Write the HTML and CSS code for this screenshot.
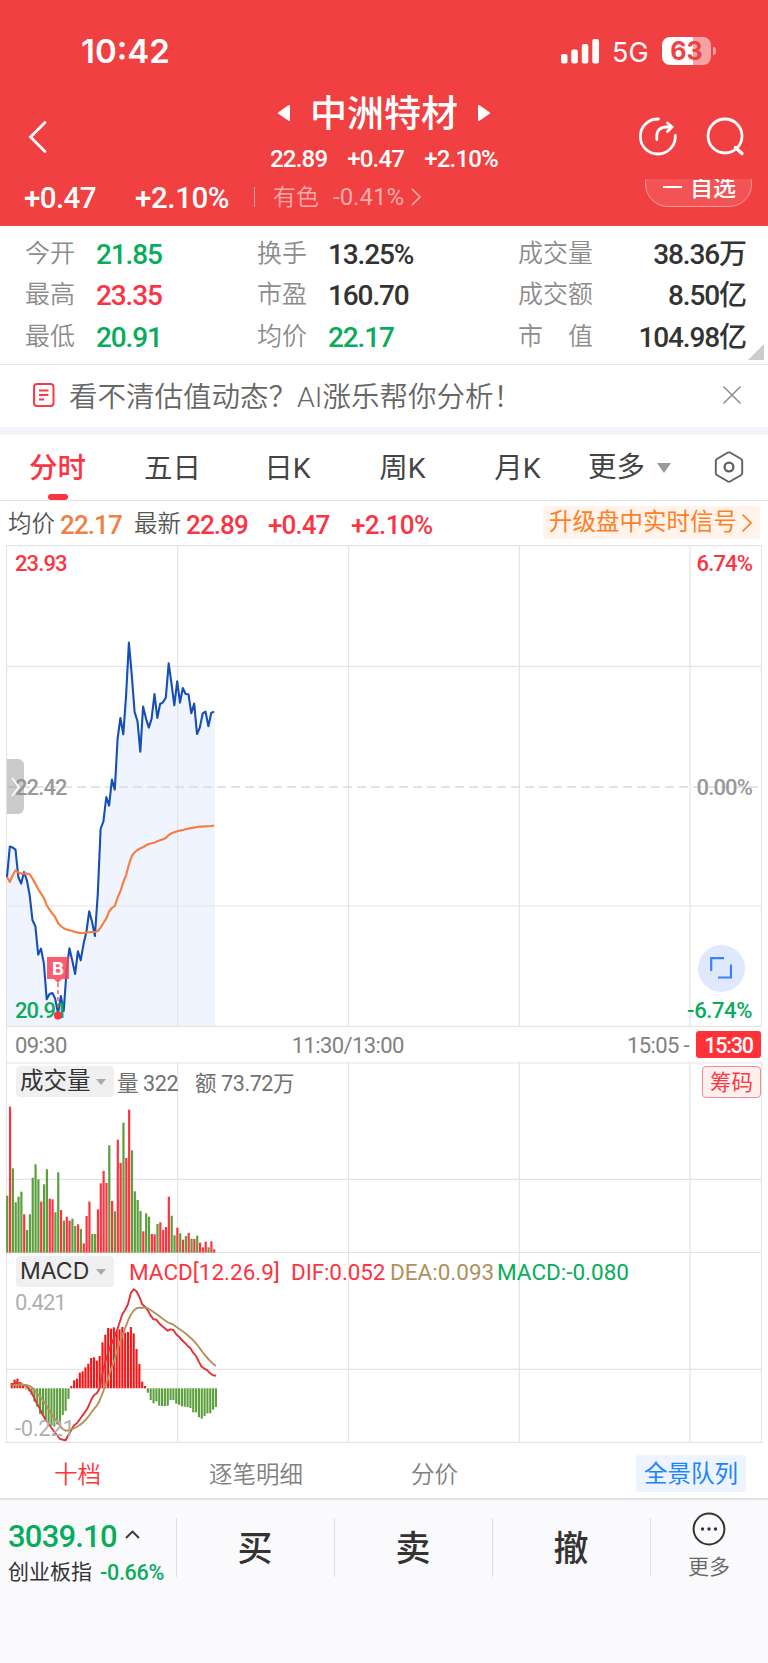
FILE: index.html
```html
<!DOCTYPE html>
<html lang="zh-CN">
<head>
	<meta charset="UTF-8" />
	<meta name="viewport" content="width=device-width, initial-scale=1.0" />
	<title>中洲特材</title>
	<link rel="stylesheet" href="styles.css">
</head>
<body>
<header>
	<div class="status">
		<span class="time">10:42</span>
		<svg class="signal" width="39" height="25" viewBox="0 0 39 25" fill="#fff">
			<rect x="0" y="15" width="6.5" height="9.5" rx="2"/>
			<rect x="10.3" y="10.5" width="6.5" height="14" rx="2"/>
			<rect x="20.8" y="5" width="6.5" height="19.5" rx="2"/>
			<rect x="31.3" y="0" width="6.7" height="24.5" rx="2"/>
		</svg>
		<span class="net">5G</span>
		<span class="battery">63</span>
	</div>
	<div class="nav">
		<svg class="back" width="20" height="34" viewBox="0 0 20 34"><path d="M17 2.500L2.500 17L17 31.500" fill="none" stroke="#fff" stroke-width="2.800" stroke-linecap="round"/></svg>
		<div class="title">
			<h1>
				<svg width="14" height="18" viewBox="0 0 14 18"><path d="M12 2V16L2 9Z" fill="#fff" stroke="#fff" stroke-width="2" stroke-linejoin="round"/></svg>
				<span>中洲特材</span>
				<svg width="14" height="18" viewBox="0 0 14 18"><path d="M2 2V16L12 9Z" fill="#fff" stroke="#fff" stroke-width="2" stroke-linejoin="round"/></svg>
			</h1>
			<div class="sub num"><span>22.89</span><span>+0.47</span><span>+2.10%</span></div>
		</div>
		<svg class="tools" width="108" height="42" viewBox="0 0 108 42" fill="none" stroke="#fff" stroke-width="2.800" stroke-linecap="round">
			<path d="M20.500 3A17.500 17.500 0 1 0 37.300 19.500"/>
			<path d="M18.800 23.500V20Q18.800 11 29 11H33.500M29.500 7L34 11L29.500 15.500"/>
			<circle cx="87" cy="20" r="17"/>
			<path d="M97.500 31.500L104 37.500" stroke-width="3.400"/>
		</svg>
	</div>
	<div class="change">
		<span class="num c1">+0.47</span>
		<span class="num c2">+2.10%</span>
		<i></i>
		<span class="sector">有色</span>
		<span class="num c3">-0.41%</span>
		<svg width="12" height="20" viewBox="0 0 12 20"><path d="M2 2L10 10L2 18" fill="none" stroke="#f9abac" stroke-width="1.700"/></svg>
		<div class="fav"><b></b>自选</div>
	</div>
</header>

<section class="quote">
	<label>今开</label><span class="num green">21.85</span>
	<label>换手</label><span class="num">13.25%</span>
	<label>成交量</label><span class="num end">38.36万</span>
	<label>最高</label><span class="num red">23.35</span>
	<label>市盈</label><span class="num">160.70</span>
	<label>成交额</label><span class="num end">8.50亿</span>
	<label>最低</label><span class="num green">20.91</span>
	<label>均价</label><span class="num green">22.17</span>
	<label>市　值</label><span class="num end">104.98亿</span>
</section>

<section class="banner">
	<svg width="22" height="24" viewBox="0 0 22 24" fill="none" stroke="#fb3a48" stroke-width="2">
		<rect x="1" y="1" width="19.500" height="22" rx="3"/>
		<path d="M6 7.500H15.500M6 12H15.500M6 16.500H11"/>
	</svg>
	<p>看不清估值动态？AI涨乐帮你分析！</p>
	<svg width="20" height="20" viewBox="0 0 20 20"><path d="M1.500 1.500L18.500 18.500M18.500 1.500L1.500 18.500" stroke="#8c8c8c" stroke-width="1.500"/></svg>
</section>

<nav class="tabs">
	<a class="active">分时</a>
	<a>五日</a>
	<a>日K</a>
	<a>周K</a>
	<a>月K</a>
	<a class="more">更多<i class="tri"></i></a>
	<svg width="30" height="32" viewBox="0 0 30 32" fill="none" stroke="#606060" stroke-width="1.900" stroke-linejoin="round">
		<path d="M13.600 1.700Q15 1 16.400 1.700L26.800 7.700Q28.200 8.600 28.200 10V22Q28.200 23.400 26.800 24.300L16.400 30.300Q15 31 13.600 30.300L3.200 24.300Q1.800 23.400 1.800 22V10Q1.800 8.600 3.200 7.700Z"/>
		<circle cx="15" cy="16" r="4.400" stroke-width="2.300"/>
	</svg>
</nav>

<div class="info">
	<span class="k">均价</span><span class="num orange">22.17</span>
	<span class="k">最新</span><span class="num red">22.89</span>
	<span class="num red i3">+0.47</span>
	<span class="num red i4">+2.10%</span>
	<div class="upgrade">升级盘中实时信号<svg width="12" height="20" viewBox="0 0 12 20"><path d="M1.500 1.500L10 10L1.500 18.500" fill="none" stroke="#ff7f27" stroke-width="1.700"/></svg></div>
</div>

<section class="panel price">
	<svg id="price" width="768" height="482" viewBox="0 0 768 482"></svg>
	<span class="lab num tl red">23.93</span>
	<span class="lab num tr red">6.74%</span>
	<span class="lab num ml">22.42</span>
	<span class="lab num mr">0.00%</span>
	<span class="lab num bl green">20.91</span>
	<span class="lab num br green">-6.74%</span>
	<div class="drawer"><svg width="9" height="20" viewBox="0 0 9 20"><path d="M1 1L8 10L1 19" fill="none" stroke="#fff" stroke-width="1.600"/></svg></div>
	<svg class="buy" width="24" height="64" viewBox="0 0 24 64">
		<path d="M1 0H23V22H16L12 26L8 22H1Z" fill="#f94256" fill-opacity=".85"/>
		<path d="M12 26V55" stroke="#f94256" stroke-width="1.300" stroke-dasharray="4 3"/>
		<circle cx="12" cy="58.500" r="4" fill="#fb3140"/>
		<text x="12" y="17.500">B</text>
	</svg>
	<div class="expand">
		<svg width="22" height="22" viewBox="0 0 22 22" fill="none" stroke="#3a82fb" stroke-width="2.200"><path d="M1.200 14V1.200H14M21 7.500V20.500H8"/></svg>
	</div>
</section>

<div class="axis num">
	<span>09:30</span>
	<span class="mid">11:30/13:00</span>
	<span class="late">15:05 -</span>
	<b>15:30</b>
</div>

<section class="panel volume">
	<svg id="volume" width="768" height="191" viewBox="0 0 768 191"></svg>
	<div class="head">
		<div class="pick">成交量<i class="tri"></i></div>
		<span class="num amount">量 322</span>
		<span class="num turnover">额 73.72万</span>
		<span class="chips">筹码</span>
	</div>
</section>

<section class="panel macd">
	<svg id="macd" width="768" height="190" viewBox="0 0 768 190"></svg>
	<div class="head">
		<div class="pick">MACD<i class="tri"></i></div>
		<span class="m1 red">MACD[12.26.9]</span>
		<span class="m2 red">DIF:0.052</span>
		<span class="m3">DEA:0.093</span>
		<span class="m4 green">MACD:-0.080</span>
	</div>
	<span class="lab num top">0.421</span>
	<span class="lab num bottom">-0.221</span>
</section>

<nav class="detail">
	<a class="active">十档</a>
	<a>逐笔明细</a>
	<a>分价</a>
	<a class="queue">全景队列</a>
</nav>

<footer>
	<div class="index">
		<div class="row1"><span class="num green">3039.10</span><svg width="15" height="9" viewBox="0 0 15 9"><path d="M1 8L7.500 1.500L14 8" fill="none" stroke="#333" stroke-width="1.800"/></svg></div>
		<div class="row2">创业板指<span class="num green">-0.66%</span></div>
	</div>
	<button>买</button>
	<button>卖</button>
	<button>撤</button>
	<div class="menu">
		<svg width="34" height="34" viewBox="0 0 34 34" fill="#333"><circle cx="17" cy="17" r="15.400" fill="none" stroke="#333" stroke-width="2"/><circle cx="10.500" cy="17" r="1.700"/><circle cx="17" cy="17" r="1.700"/><circle cx="23.500" cy="17" r="1.700"/></svg>
		<span>更多</span>
	</div>
</footer>

<script src="charts.js"></script>
</body>
</html>
```

FILE: styles.css
```css
* {
	padding: 0;
	margin: 0;
	box-sizing: border-box;
}
body {
	width: 768px;
	height: 1663px;
	overflow: hidden;
	background: #fff;
	color: #333;
	font-family: Roboto, "Noto Sans CJK SC", sans-serif;
	font-weight: 350;
	white-space: nowrap;
}
svg {
	display: block;
	flex: none;
}
.num {
	font-family: Roboto, "Noto Sans CJK SC", sans-serif;
	font-weight: 500;
	letter-spacing: -0.04em;
}
.red { color: #fb3443; }
.green { color: #09ab5c; }
.orange { color: #f08040; }
.tri {
	width: 0;
	height: 0;
	border: 7px solid transparent;
	border-top: 10px solid #999;
	border-bottom: 0;
}

/* header */
header {
	height: 226px;
	background: #f04042;
	color: #fff;
}
.status {
	display: flex;
	height: 90px;
	padding: 0 57px 0 81px;
	font-family: Inter, sans-serif;
}
.time {
	flex: 1;
	margin-top: 31px;
	font-size: 33px;
	line-height: 40px;
	font-weight: 600;
}
.signal {
	margin-top: 39px;
}
.net {
	width: 39px;
	margin: 37px 11px 0 12px;
	font-size: 27px;
	line-height: 32px;
	font-weight: 400;
}
.battery {
	position: relative;
	width: 49px;
	height: 28px;
	margin-top: 37px;
	border-radius: 8px;
	background: linear-gradient(90deg, #fff 31px, #f8a2a3 31px);
	color: #f04042;
	font-size: 25px;
	line-height: 28px;
	font-weight: 700;
	text-align: center;
}
.battery::after {
	content: "";
	position: absolute;
	right: -5px;
	top: 10px;
	width: 3px;
	height: 8px;
	border-radius: 0 4px 4px 0;
	background: #f8a2a3;
}
.nav {
	display: flex;
	height: 89px;
	padding: 0 22px 0 28px;
}
.back {
	margin-top: 30px;
}
.title {
	flex: 1;
	padding-left: 82px;
}
.title h1 {
	display: flex;
	align-items: center;
	justify-content: center;
	gap: 19px;
	height: 46px;
	font-size: 37px;
	line-height: 46px;
	font-weight: 500;
}
.title h1 span {
	padding-top: 3px;
}
.sub {
	display: flex;
	justify-content: center;
	gap: 20px;
	font-size: 24px;
	line-height: 46px;
	letter-spacing: -0.8px;
}
.tools {
	margin-top: 26px;
}
.change {
	display: flex;
	height: 47px;
	overflow: hidden;
	line-height: 38px;
}
.c1 {
	width: 111px;
	margin-left: 24px;
	font-size: 29.5px;
	letter-spacing: -0.6px;
}
.c2 {
	width: 119px;
	font-size: 29.5px;
	letter-spacing: -0.4px;
}
.change i {
	width: 1px;
	height: 20px;
	margin: 8px 18px 0 0;
	background: #f79a9b;
}
.sector {
	width: 60px;
	color: #f9abac;
	font-size: 23px;
	line-height: 37px;
}
.c3 {
	width: 77px;
	color: #f9abac;
	font-size: 24px;
	line-height: 37px;
	font-weight: 400;
	letter-spacing: 0;
}
.change svg {
	margin-top: 8px;
}
.fav {
	display: flex;
	align-items: center;
	width: 107px;
	height: 46px;
	margin: -18px 0 0 223px;
	padding: 9px 0 0 17px;
	border: 1.5px solid #f79a9b;
	border-radius: 23px;
	background: #f25456;
	font-size: 23px;
	font-weight: 500;
}
.fav b {
	width: 19px;
	height: 2px;
	margin: -3px 8px 0 0;
	background: #fff;
}

/* quote */
.quote {
	display: grid;
	grid-template-columns: 71px 161px 71px 190px 115px 113px;
	grid-auto-rows: 41.3px;
	position: relative;
	height: 139px;
	padding: 7px 0 0 25px;
	border-bottom: 1px solid #e8e8ea;
	line-height: 44px;
	font-size: 28px;
}
.quote::after {
	content: "";
	position: absolute;
	right: 4px;
	bottom: 4px;
	border: 8px solid #ccc;
	border-top-color: transparent;
	border-left-color: transparent;
}
.quote label {
	color: #8c8c8c;
	font-size: 25px;
	line-height: 42px;
}
.quote .end {
	text-align: right;
}

/* banner */
.banner {
	display: flex;
	align-items: center;
	height: 70px;
	padding: 0 26px 0 33px;
	border-bottom: 8px solid #f3f4f9;
}
.banner p {
	flex: 1;
	padding-left: 14px;
	margin-top: -3px;
	color: #666;
	font-size: 28.5px;
}
.banner svg {
	margin-top: -2px;
}

/* tabs */
.tabs {
	display: flex;
	height: 66px;
	border-bottom: 1px solid #e3e3e3;
	line-height: 68px;
	font-size: 28.5px;
	font-weight: 400;
	color: #444;
}
.tabs a {
	position: relative;
	width: 115px;
	text-align: center;
}
.tabs .active {
	color: #fb3443;
	font-weight: 500;
}
.tabs .active::after {
	content: "";
	position: absolute;
	left: 48px;
	bottom: 0;
	width: 20px;
	height: 6px;
	border-radius: 3px;
	background: #fb3443;
}
.tabs .more {
	display: flex;
	align-items: center;
	gap: 12px;
	width: 139px;
	padding-left: 13px;
}
.tabs svg {
	margin-top: 16px;
}

/* price info */
.info {
	display: flex;
	height: 44px;
	padding: 0 8px;
	line-height: 48px;
	font-size: 26px;
}
.info .num {
	letter-spacing: -0.9px;
}
.info .k {
	width: 52px;
	font-size: 23.5px;
	line-height: 46px;
	color: #555;
}
.info .orange {
	width: 74px;
}
.info .red {
	width: 82px;
}
.info .i3 {
	width: 83px;
}
.info .i4 {
	flex: 1;
	letter-spacing: -0.6px;
}
.upgrade {
	display: flex;
	align-items: center;
	gap: 4px;
	width: 217px;
	height: 33px;
	margin-top: 5px;
	padding-left: 6px;
	border-radius: 4px;
	background: #fff3eb;
	color: #ff7f27;
	font-size: 23.5px;
	font-weight: 400;
	line-height: 35px;
}

/* charts */
.panel {
	position: relative;
}
.lab {
	position: absolute;
	font-size: 22px;
	line-height: 26px;
}
.tl { left: 15px; top: 6px; }
.tr { right: 16px; top: 6px; }
.ml { left: 15px; top: 230px; color: #999; }
.mr { right: 16px; top: 230px; color: #999; }
.bl { left: 15px; top: 453px; }
.br { right: 16px; top: 453px; letter-spacing: -0.4px; }
.drawer {
	position: absolute;
	left: 7px;
	top: 214px;
	width: 17px;
	height: 55px;
	padding: 18px 0 0 4px;
	border-radius: 0 6px 6px 0;
	background: rgba(140, 140, 140, .45);
}
.buy {
	position: absolute;
	left: 46px;
	top: 412px;
}
.buy text {
	fill: #fff;
	font: 700 18px Inter, sans-serif;
	text-anchor: middle;
}
.expand {
	position: absolute;
	left: 698px;
	top: 400px;
	width: 47px;
	height: 47px;
	padding: 12px;
	border-radius: 50%;
	background: #dfe8fd;
}
.axis {
	display: flex;
	align-items: center;
	height: 35px;
	margin-left: 6px;
	padding: 2px 7px 0 8px;
	border-left: 1px solid #e4e4e4;
	color: #808080;
	font-size: 22px;
	font-weight: 400;
	letter-spacing: -0.6px;
}
.axis .mid {
	margin-left: 225px;
}
.axis .late {
	flex: 1;
	padding-right: 7px;
	text-align: right;
}
.axis b {
	width: 65px;
	height: 27px;
	margin-top: -2px;
	border-radius: 3px;
	background: #ff3237;
	color: #fff;
	font-size: 21.5px;
	line-height: 30px;
	font-weight: 500;
	text-align: center;
	letter-spacing: -1.2px;
}
.head {
	display: flex;
	align-items: flex-start;
	position: absolute;
	left: 16px;
	right: 7px;
	top: 4px;
	line-height: 33px;
}
.pick {
	display: flex;
	align-items: center;
	justify-content: space-between;
	width: 98px;
	height: 31px;
	padding: 0 8px 0 4px;
	border-radius: 4px;
	background: #f0f0f0;
	font-size: 23.5px;
	font-weight: 400;
}
.pick .tri {
	border-width: 6px 5px 0;
	border-top-color: #aaa;
}
.amount, .turnover {
	padding-left: 3px;
	width: 78px;
	color: #707070;
	font-size: 21.5px;
	font-weight: 400;
	letter-spacing: -0.4px;
	line-height: 35px;
}
.turnover {
	flex: 1;
}
.chips {
	width: 59px;
	height: 32px;
	border: 1.5px solid #fb8a8e;
	border-radius: 4px;
	background: #fff0f0;
	color: #fb3a42;
	font-size: 21.5px;
	font-weight: 400;
	line-height: 31px;
	text-align: center;
}
.macd .pick {
	font-family: Inter, sans-serif;
	font-size: 23px;
}
.macd .head {
	top: 3px;
	font-size: 22.5px;
	font-weight: 400;
}
.m1 {
	width: 162px;
	margin-left: 15px;
}
.m2 {
	width: 99px;
	letter-spacing: -0.1px;
}
.m3 {
	width: 107px;
	color: #b09060;
}
.macd .lab {
	left: 15px;
	color: #b0b0b0;
	font-weight: 400;
}
.macd .top { top: 37px; }
.macd .bottom { top: 163px; letter-spacing: -0.3px; }

/* bottom */
.detail {
	display: flex;
	align-items: center;
	height: 57px;
	border-bottom: 2px solid #e3e3e8;
	padding: 9px 22px 0 54px;
	color: #808080;
	font-size: 23.5px;
	line-height: 55px;
}
.detail a:nth-child(1) { width: 155px; }
.detail a:nth-child(2) { width: 202px; }
.detail .active {
	color: #ff3237;
}
.detail .queue {
	width: 110px;
	height: 37px;
	margin: -4px 0 0 auto;
	border-radius: 3px;
	background: #edf3ff;
	color: #1a85ff;
	line-height: 39px;
	font-weight: 400;
	text-align: center;
}
footer {
	display: flex;
	height: 163px;
	background: #fafafc;
}
.index {
	width: 176px;
	padding: 16px 0 0 8px;
}
.row1 {
	display: flex;
	align-items: center;
	gap: 8px;
	height: 40px;
	font-size: 31px;
}
.row1 .num {
	letter-spacing: -0.8px;
}
.row1 svg {
	margin-top: -3px;
}
.row2 {
	display: flex;
	gap: 8px;
	height: 32px;
	line-height: 32px;
	font-size: 21px;
	font-weight: 400;
}
.row2 .num {
	font-size: 21.5px;
	line-height: 34px;
	letter-spacing: -0.3px;
}
footer button {
	position: relative;
	width: 158px;
	height: 96px;
	padding-bottom: 5px;
	border: 0;
	background: none;
	color: #333;
	font: 500 35px "Noto Sans CJK SC", sans-serif;
}
footer button::before {
	content: "";
	position: absolute;
	left: 0;
	top: 18px;
	width: 1px;
	height: 59px;
	background: #dedee2;
}
.menu {
	flex: 1;
	display: flex;
	flex-direction: column;
	align-items: center;
	margin: 12px 0 0 0;
	height: 66px;
	color: #666;
	font-size: 21px;
	line-height: 42px;
	position: relative;
}
.menu::before {
	content: "";
	position: absolute;
	left: 0;
	top: 6px;
	width: 1px;
	height: 59px;
	background: #dedee2;
}
```

FILE: charts.js
```javascript
// one value per minute, y from the top of the panel in @3x pixels
const price = [770,679,682,688,770,790,755,780,825,900,918,1003,985,1030,1137,1121,1118,1135,1180,1127,1172,1050,984,1020,1061,993,1020,970,935,873,905,947,820,626,603,530,556,478,508,355,293,342,225,67,165,275,303,394,259,295,322,295,221,293,251,246,232,129,190,255,183,247,203,221,222,279,250,341,322,279,274,318,278,274];
const average = [770,785,765,750,757,760,760,760,762,775,790,807,820,833,855,868,880,890,908,917,924,928,930,932,935,937,938,938,937,936,935,935,932,922,908,895,873,863,857,832,813,785,765,733,707,696,689,684,681,675,671,669,667,663,660,657,653,644,639,636,633,631,629,627,625,623,622,620,619,619,618,618,617,616];
const volume = 'g527,r260,g445,g547,g530,g515,r583,g630,g583,g473,g433,g478,r545,g493,g448,r536,r538,g577,g457,r570,g602,r590,r602,g596,g618,r613,g627,r670,r588,r545,g642,g642,r568,r490,r453,r489,g376,r543,g574,r359,r429,g308,r414,r269,g391,g514,g540,g573,r634,g580,g590,r642,r643,g612,r607,r630,r621,r530,g587,g646,r623,g640,r659,g648,r639,g656,r657,g647,r668,r682,r665,g682,r664,r688'.split(',');
const bars = [399,389,386,396,408,418,424,435,455,470,492,498,508,520,527,530,523,515,495,483,447,408,391,386,368,364,352,341,324,322,332,318,277,254,234,236,232,245,238,231,248,246,231,250,297,342,395,408,428,450,460,454,467,468,468,467,450,450,461,464,469,470,471,474,487,487,502,506,498,490,490,479,471];
const dif = [405,400,398,402,404,408,415,428,445,462,478,495,510,522,533,545,556,567,569,571,555,540,526,520,508,496,485,470,450,436,430,415,370,335,308,285,265,245,218,193,180,162,130,118,124,140,163,170,181,197,208,209,220,228,235,242,238,240,253,260,270,278,287,295,308,318,335,350,356,361,370,376,377];
const dea = [407,405,404,403,404,405,407,412,420,430,440,451,463,478,491,504,515,527,537,542,541,538,535,530,525,518,510,500,488,477,467,452,430,408,385,358,335,308,280,258,235,212,194,182,175,173,173,173,175,180,186,192,198,205,211,217,220,224,230,236,242,248,255,263,271,280,291,303,314,324,333,341,348];

const step = 2.836;

function rect(x, y, w, h, fill) {
	return `<rect x="${x.toFixed(2)}" y="${y.toFixed(2)}" width="${w}" height="${h.toFixed(2)}" fill="${fill}"/>`;
}

function points(data, left, top) {
	return data.map((v, i) => (left + i * step).toFixed(1) + ',' + (v / 3 + top).toFixed(1)).join(' ');
}

function line(pts, color, width) {
	return `<polyline points="${pts}" fill="none" stroke="${color}" stroke-width="${width}" stroke-linejoin="round"/>`;
}

function grid(height, rows) {
	let d = '';
	for (const x of [6.5, 177.7, 348.5, 519.3, 690, 761.5]) d += `M${x} 0V${height}`;
	for (const y of rows) d += `M6 ${y}H762`;
	return `<path d="${d}" fill="none" stroke="#e4e4e4" stroke-width="1.2"/>`;
}

const p = points(price, 7, 75.3);
document.getElementById('price').innerHTML =
	`<polygon points="7,481 ${p} 215,166 215,481" fill="#eff4fe"/>` +
	grid(482, [0.7, 121.3, 361, 481.3]) +
	'<path d="M7 242H762" stroke="#d3dce4" stroke-width="1.5" stroke-dasharray="9 5"/>' +
	line(p, '#164fb5', 2.1) +
	line(points(average, 7, 75.3), '#fb7a3c', 2.1);

document.getElementById('volume').innerHTML = grid(191, [1, 117.3, 190.5]) +
	volume.map((v, i) => {
		const y = v.slice(1) / 3 - 42;
		return rect(6.1 + i * step, y, 2.2, 190.6 - y, v[0] === 'r' ? '#fb3440' : '#5b9f3c');
	}).join('');

document.getElementById('macd').innerHTML = grid(190, [116.3, 189.3]) +
	bars.map((v, i) => {
		const y = v / 3 - 3;
		const zero = 135.3;
		return rect(10.7 + i * step, Math.min(y, zero), 2.1, Math.abs(y - zero), v < 415 ? '#f81212' : '#5b9f3c');
	}).join('') +
	line(points(dif, 11.7, -3), '#e23237', 1.9) +
	line(points(dea, 11.7, -3), '#b2935b', 1.9);
```
